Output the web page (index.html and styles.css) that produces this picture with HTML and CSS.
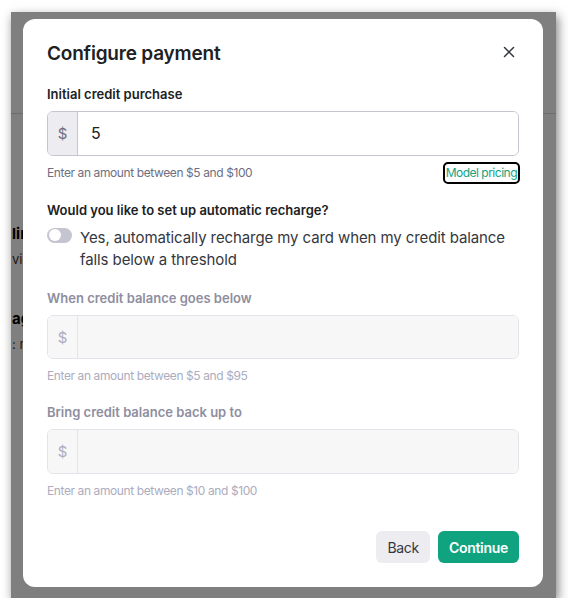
FILE: index.html
```html
<!DOCTYPE html>
<html lang="en">
<head>
  <meta charset="UTF-8">
  <title>Configure payment</title>
  <meta name="viewport" content="width=device-width, initial-scale=1.0">
  <link rel="stylesheet" href="styles.css">
</head>
<body>
  <div class="frame">
    <!-- pagina por tras do modal -->
    <div class="page">
      <div class="page-top"></div>
      <div class="page-row first">
        <strong>limits</strong>
        <span>view</span>
      </div>
      <div class="page-row">
        <strong>agents</strong>
        <span>: no</span>
      </div>
    </div>
    <div class="overlay"></div>

    <div class="dialog">
      <div class="dialog-head">
        <h1>Configure payment</h1>
        <button class="close-btn" type="button" aria-label="Close">
          <svg width="20" height="20" viewBox="0 0 20 20" fill="none">
            <path d="M5.5 5.5l9 9M14.5 5.5l-9 9" stroke="#353740" stroke-width="1.5" stroke-linecap="round"/>
          </svg>
        </button>
      </div>

      <label class="field-label">Initial credit purchase</label>
      <div class="money-input">
        <span class="prefix">$</span>
        <input type="text" value="5">
      </div>
      <div class="field-help">
        <span>Enter an amount between $5 and $100</span>
        <a href="#" class="pricing-link">Model pricing</a>
      </div>

      <div class="field-label question">Would you like to set up automatic recharge?</div>
      <div class="toggle-row">
        <span class="toggle"><span class="knob"></span></span>
        <span class="toggle-text">Yes, automatically recharge my card when my credit balance falls below a threshold</span>
      </div>

      <label class="field-label disabled">When credit balance goes below</label>
      <div class="money-input disabled">
        <span class="prefix">$</span>
        <input type="text" disabled>
      </div>
      <div class="field-help disabled">Enter an amount between $5 and $95</div>

      <label class="field-label disabled">Bring credit balance back up to</label>
      <div class="money-input disabled">
        <span class="prefix">$</span>
        <input type="text" disabled>
      </div>
      <div class="field-help disabled">Enter an amount between $10 and $100</div>

      <div class="dialog-actions">
        <button type="button" class="btn btn-back">Back</button>
        <button type="button" class="btn btn-continue">Continue</button>
      </div>
    </div>
  </div>
</body>
</html>
```

FILE: styles.css
```css
body {
  margin: 0;
  background: #fff;
  font-family: 'Inter', 'Noto Sans', Arial, sans-serif;
  color: #202123;
}
.frame {
  position: relative;
  width: 545px;
  height: 586px;
  margin: 12px 0 0 11px;
  overflow: hidden;
  background: #fff;
  box-shadow: 2px 4px 10px rgba(0,0,0,0.5);
}
.page-top {
  height: 101px;
  border-bottom: 1px solid #d9d9e3;
}
.page-row {
  display: flex;
  flex-direction: column;
  gap: 8px;
  margin-left: 1px;
  margin-top: 43px;
}
.page-row.first {
  margin-top: 111px;
}
.page-row strong {
  font-size: 15px;
  line-height: 18px;
  color: #000;
}
.page-row span {
  font-size: 13px;
  line-height: 16px;
  color: #353740;
}
.overlay {
  position: absolute;
  inset: 0;
  background: rgba(0,0,0,0.5);
}
.dialog {
  position: absolute;
  top: 7px;
  left: 12px;
  width: 520px;
  height: 568px;
  box-sizing: border-box;
  background: #fff;
  border-radius: 12px;
  padding: 21px 24px 24px 24px;
  display: flex;
  flex-direction: column;
}
.dialog-head {
  display: flex;
  justify-content: space-between;
  align-items: center;
  height: 28px;
}
.dialog-head h1 {
  margin: 0;
  font-size: 19px;
  font-weight: 600;
  letter-spacing: -0.2px;
  line-height: 28px;
}
.close-btn {
  border: none;
  background: none;
  padding: 0;
  width: 20px;
  height: 20px;
  margin-top: -4px;
  cursor: pointer;
}
.field-label {
  display: block;
  margin-top: 16px;
  margin-bottom: 7px;
  font-size: 13px;
  font-weight: 600;
  line-height: 20px;
  color: #202123;
}
.field-label.question {
  margin-top: 18px;
  margin-bottom: 0;
}
.field-label.disabled {
  margin-top: 17px;
  color: #8e8ea0;
}
.money-input {
  display: flex;
  height: 45px;
  box-sizing: border-box;
  border: 1px solid #c5c5d2;
  border-radius: 6px;
  overflow: hidden;
}
.money-input .prefix {
  width: 29px;
  display: flex;
  align-items: center;
  justify-content: center;
  background: #ececf1;
  border-right: 1px solid #c5c5d2;
  color: #6e6e80;
  font-size: 15px;
}
.money-input input {
  flex: 1;
  border: none;
  outline: none;
  padding: 0 13px;
  font-family: inherit;
  font-size: 16px;
  color: #202123;
  background: #fff;
}
.money-input.disabled {
  border-color: #e3e3ea;
}
.money-input.disabled .prefix {
  background: #f7f7f8;
  border-right-color: #e3e3ea;
  color: #acacbe;
}
.money-input.disabled input {
  background: #f7f7f8;
}
.field-help {
  display: flex;
  justify-content: space-between;
  align-items: center;
  margin-top: 8px;
  font-size: 12px;
  letter-spacing: -0.4px;
  line-height: 18px;
  color: #6e6e80;
}
.field-help.disabled {
  color: #acacbe;
}
.pricing-link {
  color: #10a37f;
  text-decoration: none;
  outline: 2px solid #000;
  border-radius: 3px;
  padding: 0 1px;
  margin-right: 1px;
  letter-spacing: -0.5px;
}
.toggle-row {
  display: flex;
  gap: 8px;
  margin-top: 7px;
}
.toggle {
  flex: none;
  width: 25px;
  height: 15px;
  margin-top: 1px;
  border-radius: 8px;
  background: #c5c5d2;
  position: relative;
}
.knob {
  position: absolute;
  top: 1.5px;
  left: 1.5px;
  width: 12px;
  height: 12px;
  border-radius: 50%;
  background: #fff;
}
.toggle-text {
  font-size: 15px;
  letter-spacing: -0.1px;
  line-height: 22px;
  color: #353740;
}
.dialog-actions {
  display: flex;
  justify-content: flex-end;
  gap: 8px;
  margin-top: 31px;
}
.btn {
  border: none;
  border-radius: 6px;
  height: 32px;
  padding: 0 11px;
  font-family: inherit;
  font-size: 14px;
  letter-spacing: -0.3px;
  cursor: pointer;
}
.btn-back {
  background: #ececf1;
  color: #353740;
}
.btn-continue {
  background: #10a37f;
  color: #fff;
  font-weight: 600;
}
```
